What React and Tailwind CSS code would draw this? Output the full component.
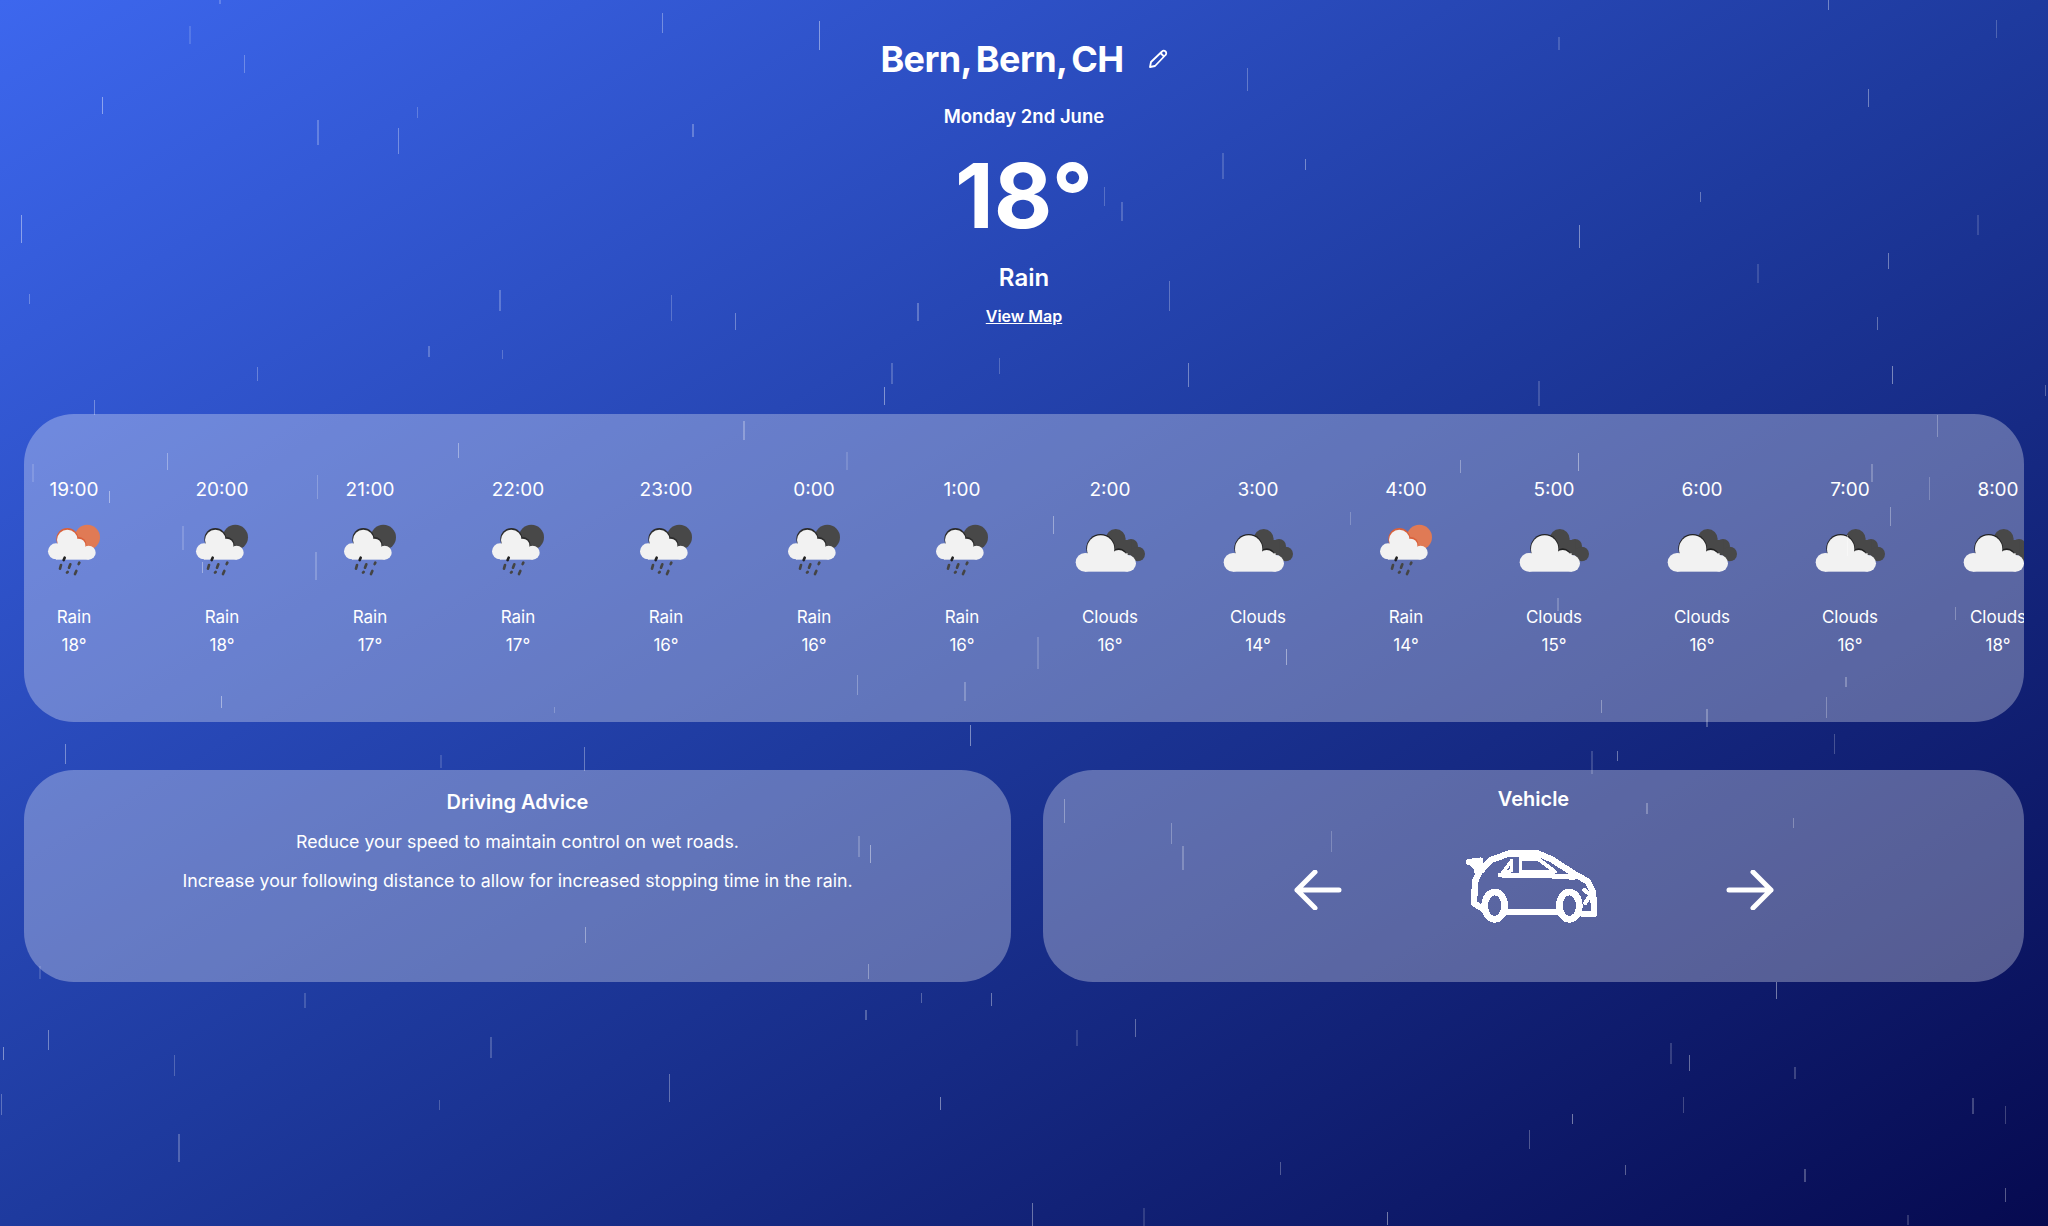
const RAIN = [
  [145,20,14],[507,10,15],[627,16,22],[1193,28,10],[1400,0,8],[1528,15,14],[168,0,3],[78,74,13],[187,42,14],[243,92,19],[319,82,8],[305,98,20],[530,95,10],[955,52,18],[1430,68,14],[1514,165,15],[1302,147,8],[1209,172,18],[936,117,20],[999,122,8],[845,143,15],[858,155,14],[16,165,21],[22,225,8],[382,222,16],[514,226,20],[563,240,13],[702,232,14],[895,215,23],[1446,194,12],[1345,202,15],[1437,243,10],[1449,280,14],[1178,292,19],[910,278,18],[765,274,12],[682,278,16],[677,296,14],[197,281,11],[328,265,8],[384,268,7],[72,306,12],[569,322,15],[1566,295,8],[351,339,12],[24.5,355,14],[128,347,13],[83.5,376,9],[139,403,18],[155,430,9],[243,364,18],[241,423,21],[169,533,9],[1483,318,17],[1433,355,14],[1477,365,18],[1447,388,15],[1413,518,8],[1398,534,16],[1414,410,16],[648,346,14],[1118,352,10],[1208,347,14],[794,488,24],[806,395,14],[1034,392,10],[1192,458,10],[985,497,12],[656,517,15],[738,522,15],[424,541,5],[1226,536,10],[1306,543,14],[1497,465,10],[50,570,15],[337,578,10],[447,572,18],[743,555,16],[1218,575,18],[1238,575,8],[1404,562,15],[657,640,16],[666,647,14],[897,630,16],[905,648,18],[1019,636,16],[815,612,18],[1260,615,8],[1373,626,8],[448,710,12],[30,740,10],[665,738,12],[1360,752,13],[233,760,12],[37,789,15],[133,808,16],[375,794,16],[2,802,10],[1,838,16],[136,868,22],[336,842,8],[512,822,22],[662,773,8],[705,760,8],[759,760,10],[824,789,12],[869,780,14],[720,840,10],[1279,799,16],[1293,808,12],[1289,840,12],[1374,817,9],[1204,853,8],[1171,865,15],[1510,841,12],[1535,847,14],[1244,892,8],[1381,895,10],[980,890,10],[790,921,18],[875,925,14],[1535,910,10],[1062,928,10],[1460,930,8],
];

const HOURS = [
  ["19:00","rain-sun","Rain","18°"],["20:00","rain-moon","Rain","18°"],["21:00","rain-moon","Rain","17°"],["22:00","rain-moon","Rain","17°"],["23:00","rain-moon","Rain","16°"],["0:00","rain-moon","Rain","16°"],["1:00","rain-moon","Rain","16°"],["2:00","clouds","Clouds","16°"],["3:00","clouds","Clouds","14°"],["4:00","rain-sun","Rain","14°"],["5:00","clouds","Clouds","15°"],["6:00","clouds","Clouds","16°"],["7:00","clouds","Clouds","16°"],["8:00","clouds","Clouds","18°"],
];

function RainIcon({ sun }) {
  const bodyColor = sun ? "#e07a55" : "#484848";
  const edge = sun ? "#d9603a" : "#2b2b2b";
  return (
    <svg viewBox="-18 0 300 210" className="w-[100px] h-[70px]">
      <circle cx="172" cy="52" r="38" fill={bodyColor} />
      <g fill={edge}>
        <circle cx="112" cy="57" r="33" />
        <circle cx="146" cy="74" r="23" />
      </g>
      <g fill="#f2f2f2">
        <circle cx="78" cy="94" r="24" />
        <circle cx="112" cy="60" r="31" />
        <circle cx="146" cy="76" r="20" />
        <circle cx="176" cy="98" r="21" />
        <rect x="78" y="80" width="98" height="39" />
      </g>
      <g stroke="#444" strokeWidth="8" strokeLinecap="round">
        <line x1="104" y1="113" x2="101" y2="120" stroke="#222" />
        <line x1="93" y1="135" x2="90" y2="146" />
        <line x1="121" y1="133" x2="117" y2="143" />
        <line x1="148" y1="128" x2="146" y2="132" />
        <line x1="113" y1="156" x2="111" y2="158" />
        <line x1="139" y1="153" x2="135" y2="162" />
      </g>
    </svg>
  );
}

function CloudsIcon() {
  return (
    <svg viewBox="0 0 300 210" className="w-[100px] h-[70px]">
      <g fill="#484848">
        <circle cx="167" cy="57" r="30" />
        <circle cx="213" cy="78" r="21" />
        <circle cx="233" cy="102" r="22" />
        <rect x="165" y="60" width="50" height="45" />
      </g>
      <g fill="#222">
        <circle cx="122" cy="85" r="43" />
        <circle cx="176" cy="112" r="27" />
      </g>
      <g fill="#f2f2f2">
        <circle cx="75" cy="127" r="28" />
        <circle cx="122" cy="87" r="41" />
        <circle cx="176" cy="114" r="24" />
        <circle cx="203" cy="130" r="25" />
        <rect x="75" y="100" width="128" height="55" />
      </g>
    </svg>
  );
}

function Arrow({ right }) {
  return (
    <svg viewBox="0 0 48 40" className="w-[48px] h-[40px]" fill="none" stroke="#fff" strokeWidth="5" strokeLinecap="round" strokeLinejoin="round">
      {right ? <path d="M3 20H45M27 2L45 20L27 38" /> : <path d="M45 20H3M21 2L3 20L21 38" />}
    </svg>
  );
}

function Car() {
  return (
    <svg viewBox="0 0 510 300" className="w-[170px] h-[100px] blur-[0.6px]" fill="none" stroke="#fff" strokeWidth="18" strokeLinejoin="round" strokeLinecap="round" shapeRendering="crispEdges">
      <path d="M84 66L118 62L108 92L120 92L150 60L205 40L290 40L332 58L400 102L440 124L456 155L460 222L425 222" strokeWidth="19" />
      <path d="M120 85L102 125L99 190L125 206" strokeWidth="19" />
      <path d="M195 216H355" strokeWidth="20" />
      <ellipse cx="161" cy="197" rx="30" ry="41" strokeWidth="20" />
      <ellipse cx="385" cy="197" rx="30" ry="41" strokeWidth="20" />
      <path d="M178 105L300 106L400 112" strokeWidth="15" />
      <path d="M185 98L212 62V92Z" strokeWidth="10" />
      <path d="M238 56H290L342 95H238Z" strokeWidth="11" />
      <path d="M100 82L84 66L118 62Z" fill="#fff" strokeWidth="12" />
      <path d="M430 150L448 165L432 190" strokeWidth="12" />
    </svg>
  );
}

export default function App() {
  return (
    <div className="relative w-[2048px] h-[1226px] overflow-hidden text-white font-['Inter',sans-serif] bg-[linear-gradient(to_bottom_right,#3d67ee_0%,#1e3a9e_50%,#060a50_100%)]">
      <header className="flex flex-col items-center pt-[39px]">
        <div className="flex items-center h-10 gap-6">
          <h1 className="text-[36px] leading-10 font-bold tracking-[-0.6px] [word-spacing:-3px]">Bern, Bern, CH</h1>
          <svg viewBox="0 0 20 20" className="w-5 h-5" fill="none" stroke="#fff" strokeWidth="1.8" strokeLinejoin="round">
            <path d="M2 18L3 13L14 2.5C15 1.5 16.5 1.5 17.5 2.5C18.5 3.5 18.5 5 17.5 6L7 17Z" />
            <path d="M12.5 4L16 7.5" />
          </svg>
        </div>
        <p className="mt-[23px] text-[18.5px] leading-7 font-semibold">Monday 2nd June</p>
        <p className="mt-[22px] text-[90px] leading-[88px] font-bold">18°</p>
        <p className="mt-[22px] text-[24px] leading-8 font-semibold">Rain</p>
        <a className="mt-3 text-[16px] leading-5 font-semibold underline">View Map</a>
      </header>

      <section className="mx-6 mt-[88px] h-[308px] rounded-[50px] bg-white/30 overflow-hidden flex gap-12 pt-[64px]">
        {HOURS.map(([time, icon, label, temp]) => (
          <div key={time} className="w-[100px] shrink-0 flex flex-col items-center">
            <p className="text-[19px] leading-6 font-normal whitespace-nowrap">{time}</p>
            <div className="mt-[18px] h-[70px]">
              {icon === "clouds" ? <CloudsIcon /> : <RainIcon sun={icon === "rain-sun"} />}
            </div>
            <p className="mt-[15px] text-[17px] leading-6 font-normal">{label}</p>
            <p className="mt-[4px] text-[17px] leading-6 font-normal">{temp}</p>
          </div>
        ))}
      </section>

      <section className="mx-6 mt-12 grid grid-cols-[987px_981px] gap-8">
        <div className="h-[212px] rounded-[50px] bg-white/30 flex flex-col items-center pt-[18px]">
          <h2 className="text-[20px] leading-7 font-semibold">Driving Advice</h2>
          <p className="mt-[12px] text-[17.8px] leading-7 font-normal">Reduce your speed to maintain control on wet roads.</p>
          <p className="mt-[11px] text-[17.8px] leading-7 font-normal">Increase your following distance to allow for increased stopping time in the rain.</p>
        </div>
        <div className="h-[212px] rounded-[50px] bg-white/30 flex flex-col items-center pt-[15px]">
          <h2 className="text-[20px] leading-7 font-semibold">Vehicle</h2>
          <div className="mt-[27px] flex items-center">
            <Arrow />
            <div className="ml-[99px] mr-[115px]"><Car /></div>
            <Arrow right />
          </div>
        </div>
      </section>

      <div className="absolute inset-0 pointer-events-none">
        {RAIN.map(([x, y, h], i) => (
          <span
            key={i}
            className="absolute bg-white"
            style={{
              left: x * 1.306,
              top: y * 1.306,
              height: h * 1.306,
              width: i % 3 === 0 ? 2 : 1,
              opacity: i % 3 === 0 ? 0.14 + ((i * 7) % 5) * 0.03 : 0.22 + ((i * 7) % 5) * 0.05,
            }}
          />
        ))}
      </div>
    </div>
  );
}
